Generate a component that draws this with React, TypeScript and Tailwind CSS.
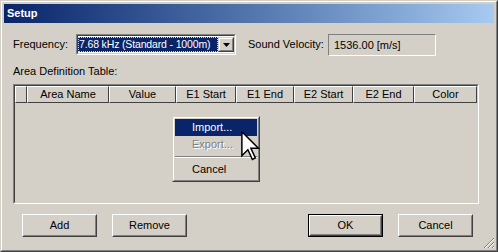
import React from "react";

const columns = [
  { name: "", w: "w-[12px]" },
  { name: "Area Name", w: "w-[82px]" },
  { name: "Value", w: "w-[67px]" },
  { name: "E1 Start", w: "w-[60px]" },
  { name: "E1 End", w: "w-[58px]" },
  { name: "E2 Start", w: "w-[59px]" },
  { name: "E2 End", w: "w-[61px]" },
  { name: "Color", w: "w-[63px]" },
];

function Button({ label, isDefault }: { label: string; isDefault?: boolean }) {
  const inner = (
    <div className="flex h-full w-full items-center justify-center border border-t-white border-l-white border-r-[#404040] border-b-[#404040] bg-[#d4d0c8]">
      <div className="flex h-full w-full items-center justify-center border border-t-[#d4d0c8] border-l-[#d4d0c8] border-r-[#808080] border-b-[#808080]">
        {label}
      </div>
    </div>
  );
  return (
    <div className={`h-[23px] w-[75px] ${isDefault ? "border border-black" : ""}`}>{inner}</div>
  );
}

function Cursor() {
  return (
    <svg width="19" height="30" viewBox="0 0 12.5 20" className="absolute left-[227px] top-[46px]">
      <path
        d="M0.5 0.5 L0.5 16.5 L4.5 12.5 L7.5 19 L9.5 18 L6.5 11.5 L11.5 11.5 Z"
        fill="#fff"
        stroke="#000"
        strokeWidth="1"
        strokeLinejoin="miter"
      />
    </svg>
  );
}

export default function App() {
  return (
    <div className="w-[498px] h-[252px] bg-[#d4d0c8] font-['Liberation_Sans',Arial,sans-serif] text-[11px] text-black">
      <div className="relative flex h-full w-full flex-col border border-t-[#d4d0c8] border-l-[#d4d0c8] border-r-[#404040] border-b-[#404040]">
        <div className="flex h-full w-full flex-col border border-t-white border-l-white border-r-[#808080] border-b-[#808080] p-[2px]">
          {/* title bar */}
          <div className="flex h-[19px] items-center bg-gradient-to-r from-[#0a246a] to-[#a6caf0] pl-[3px] text-[11px] font-bold text-white">
            Setup
          </div>

          <div className="flex flex-col pl-[9px] pr-[13px]">
            {/* frequency row */}
            <div className="mt-[11px] flex h-[22px] items-start">
              <div className="w-[63px] pt-[3px] leading-[14px]">Frequency:</div>
              <div className="h-[21px] w-[160px] border border-t-[#808080] border-l-[#808080] border-r-white border-b-white">
                <div className="flex h-full w-full items-center border border-t-[#404040] border-l-[#404040] border-r-[#d4d0c8] border-b-[#d4d0c8] bg-white py-[1px]">
                  <div className="flex h-full min-w-0 flex-1 items-center whitespace-nowrap bg-[#0a246a] pl-[1px] text-[10.5px] tracking-[-0.15px] text-white outline outline-1 outline-dotted outline-[#d4d0c8] -outline-offset-1">
                    7.68 kHz (Standard - 1000m)
                  </div>
                  <div className="h-full w-[16px] shrink-0 border border-t-[#d4d0c8] border-l-[#d4d0c8] border-r-[#404040] border-b-[#404040] bg-[#d4d0c8]">
                    <div className="flex h-full w-full items-center justify-center border border-t-white border-l-white border-r-[#808080] border-b-[#808080]">
                      <svg width="7" height="4" viewBox="0 0 7 4">
                        <path d="M0 0 H7 L3.5 4 Z" fill="#000" />
                      </svg>
                    </div>
                  </div>
                </div>
              </div>
              <div className="ml-[12px] w-[80px] pt-[3px] leading-[14px] whitespace-nowrap">Sound Velocity:</div>
              <div className="flex h-[22px] w-[108px] items-center border border-t-[#808080] border-l-[#808080] border-r-white border-b-white pl-[5px]">
                1536.00 [m/s]
              </div>
            </div>

            <div className="mt-[8px] leading-[14px]">Area Definition Table:</div>

            {/* table */}
            <div className="relative mt-[6px] h-[120px] w-[466px] border border-t-[#808080] border-l-[#808080] border-r-white border-b-white">
              <div className="h-full w-full border border-t-[#404040] border-l-[#404040] border-r-[#d4d0c8] border-b-[#d4d0c8]">
                <div className="flex h-[17px]">
                  {columns.map((c, i) => (
                    <div
                      key={i}
                      className={`${c.w} flex items-center justify-center border border-t-white border-l-white border-r-[#404040] border-b-[#404040] leading-none`}
                    >
                      {c.name}
                    </div>
                  ))}
                </div>
              </div>

              {/* context menu */}
              <div className="absolute left-[158px] top-[31px] w-[88px] border border-t-[#d4d0c8] border-l-[#d4d0c8] border-r-[#404040] border-b-[#404040] bg-[#d4d0c8]">
                <div className="flex flex-col border border-t-white border-l-white border-r-[#808080] border-b-[#808080] p-[1px] pb-[2px]">
                  <div className="flex h-[17px] items-center bg-[#0a246a] pl-[17px] text-white">Import...</div>
                  <div className="flex h-[17px] items-center pl-[17px] text-[#808080] [text-shadow:1px_1px_0_#fff]">Export...</div>
                  <div className="my-[3px] h-[2px] border-t border-t-[#808080] border-b border-b-white" />
                  <div className="flex h-[17px] items-center pl-[17px]">Cancel</div>
                </div>
              </div>
              <Cursor />
            </div>

            {/* buttons */}
            <div className="mt-[10px] flex pl-[9px] pr-[8px]">
              <Button label="Add" />
              <div className="ml-[15px]">
                <Button label="Remove" />
              </div>
              <div className="flex-1" />
              <Button label="OK" isDefault />
              <div className="ml-[15px]">
                <Button label="Cancel" />
              </div>
            </div>
          </div>
        </div>

        {/* size grip */}
        <svg width="12" height="12" viewBox="0 0 12 12" className="absolute bottom-[2px] right-[2px]">
          <path d="M11 1 L1 11 M11 5 L5 11 M11 9 L9 11" stroke="#808080" strokeWidth="1" />
          <path d="M11 2 L2 11 M11 6 L6 11 M11 10 L10 11" stroke="#fff" strokeWidth="1" />
        </svg>
      </div>
    </div>
  );
}
